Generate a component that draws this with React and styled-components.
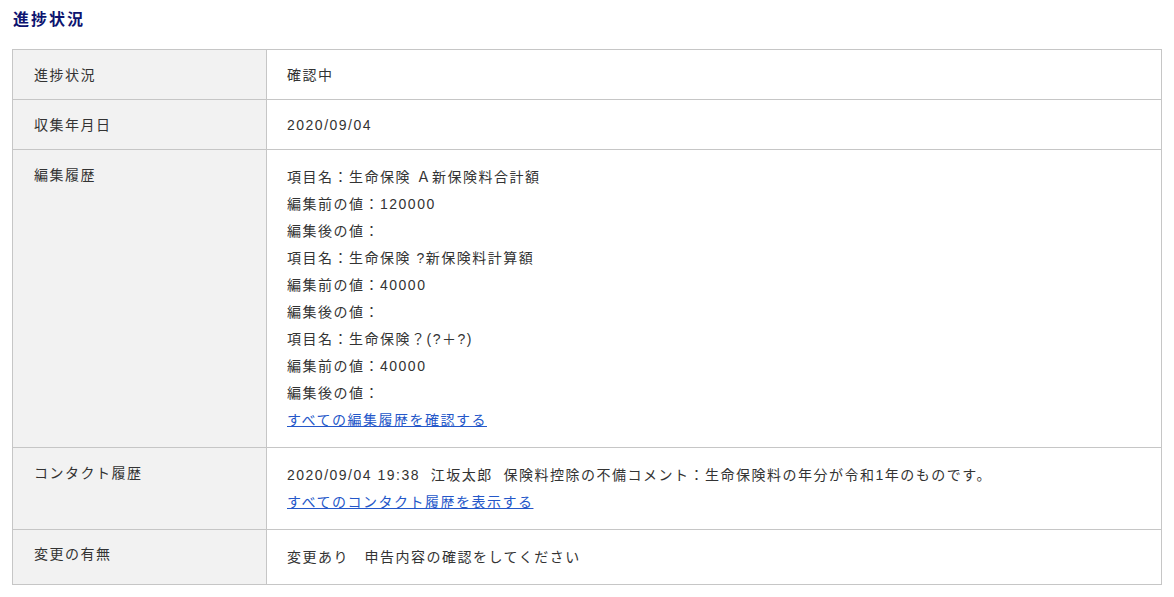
import React from 'react';
import styled, { createGlobalStyle } from "styled-components";

const GlobalStyle = createGlobalStyle`
  body {
    margin: 0;
    background: #fff;
    font-family: "Liberation Sans", "Noto Sans CJK JP", sans-serif;
    color: #333;
  }
`;

const StyledWrap = styled.div`
  padding: 10px 12px 12px;
`;

const StyledTitle = styled.h2`
  margin: 0 0 19px 1px;
  font-size: 16px;
  line-height: 20px;
  letter-spacing: 2px;
  font-weight: 700;
  color: #0d1470;
`;

const StyledTable = styled.table`
  width: 100%;
  border-collapse: collapse;
  font-size: 14px;
  letter-spacing: 1.5px;
  border: 1px solid #c6c6c6;
`;

const StyledLabel = styled.th`
  width: 212px;
  padding: ${(props) => props.padding || "15px 20px 14px 21px"};
  background: #f2f2f2;
  border: 1px solid #c6c6c6;
  text-align: left;
  vertical-align: top;
  font-weight: 400;
  line-height: 20px;
`;

const StyledValue = styled.td`
  padding: ${(props) => (props.multi ? "14px 20px 13px" : "15px 20px 14px")};
  border: 1px solid #c6c6c6;
  vertical-align: top;
  line-height: ${(props) => (props.multi ? "27px" : "20px")};
`;

const StyledLine = styled.div`
  white-space: pre;
`;

const StyledLink = styled.a`
  color: #2457c9;
  text-decoration: underline;
  cursor: pointer;
`;

const history = [
  "項目名：生命保険 Ａ新保険料合計額",
  "編集前の値：120000",
  "編集後の値：",
  "項目名：生命保険 ?新保険料計算額",
  "編集前の値：40000",
  "編集後の値：",
  "項目名：生命保険？(?＋?)",
  "編集前の値：40000",
  "編集後の値：",
];

const App = () => {
  return (
    <StyledWrap>
      <GlobalStyle />
      <StyledTitle>進捗状況</StyledTitle>
      <StyledTable>
        <tbody>
          <tr>
            <StyledLabel>進捗状況</StyledLabel>
            <StyledValue>確認中</StyledValue>
          </tr>
          <tr>
            <StyledLabel>収集年月日</StyledLabel>
            <StyledValue>2020/09/04</StyledValue>
          </tr>
          <tr>
            <StyledLabel>編集履歴</StyledLabel>
            <StyledValue multi>
              {history.map((line, i) => (
                <StyledLine key={i}>{line}</StyledLine>
              ))}
              <StyledLine>
                <StyledLink>すべての編集履歴を確認する</StyledLink>
              </StyledLine>
            </StyledValue>
          </tr>
          <tr>
            <StyledLabel>コンタクト履歴</StyledLabel>
            <StyledValue multi>
              <StyledLine>2020/09/04 19:38  江坂太郎  保険料控除の不備コメント：生命保険料の年分が令和1年のものです。</StyledLine>
              <StyledLine>
                <StyledLink>すべてのコンタクト履歴を表示する</StyledLink>
              </StyledLine>
            </StyledValue>
          </tr>
          <tr>
            <StyledLabel padding={"14px 20px 14px 21px"}>変更の有無</StyledLabel>
            <StyledValue multi>変更あり　申告内容の確認をしてください</StyledValue>
          </tr>
        </tbody>
      </StyledTable>
    </StyledWrap>
  );
}

export default App;
